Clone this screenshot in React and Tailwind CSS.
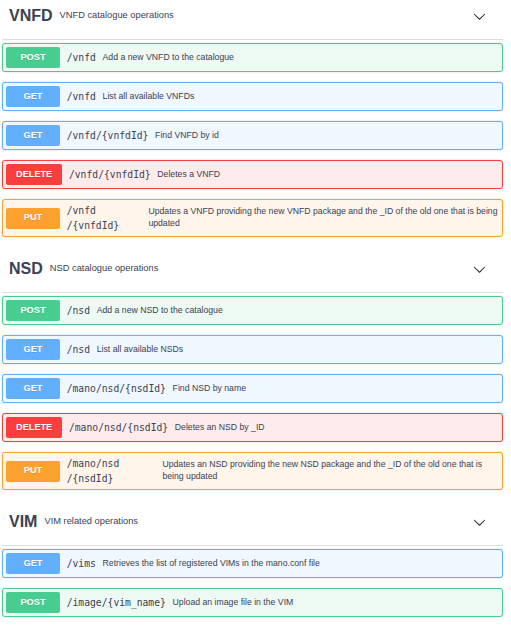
import React from 'react';

const METHOD_STYLES = {
  POST: { row: 'border-[#49cc90] bg-[#edfaf4]', badge: 'bg-[#49cc90]' },
  GET: { row: 'border-[#61affe] bg-[#eff7ff]', badge: 'bg-[#61affe]' },
  DELETE: { row: 'border-[#f93e3e] bg-[#feecec]', badge: 'bg-[#f93e3e]' },
  PUT: { row: 'border-[#fca130] bg-[#fff5ea]', badge: 'bg-[#fca130]' },
};

const sections = [
  {
    name: 'VNFD',
    description: 'VNFD catalogue operations',
    ops: [
      { method: 'POST', path: '/vnfd', summary: ['Add a new VNFD to the catalogue'] },
      { method: 'GET', path: '/vnfd', summary: ['List all available VNFDs'] },
      { method: 'GET', path: '/vnfd/{vnfdId}', summary: ['Find VNFD by id'] },
      { method: 'DELETE', path: '/vnfd/{vnfdId}', summary: ['Deletes a VNFD'] },
      {
        method: 'PUT',
        path: '/vnfd/{vnfdId}',
        pathWidth: 'w-[75px]',
        summary: [
          'Updates a VNFD providing the new VNFD package and the _ID of the old one that is being',
          'updated',
        ],
      },
    ],
  },
  {
    name: 'NSD',
    description: 'NSD catalogue operations',
    ops: [
      { method: 'POST', path: '/nsd', summary: ['Add a new NSD to the catalogue'] },
      { method: 'GET', path: '/nsd', summary: ['List all available NSDs'] },
      { method: 'GET', path: '/mano/nsd/{nsdId}', summary: ['Find NSD by name'] },
      { method: 'DELETE', path: '/mano/nsd/{nsdId}', summary: ['Deletes an NSD by _ID'] },
      {
        method: 'PUT',
        path: '/mano/nsd/{nsdId}',
        pathWidth: 'w-[89px]',
        summary: [
          'Updates an NSD providing the new NSD package and the _ID of the old one that is',
          'being updated',
        ],
      },
    ],
  },
  {
    name: 'VIM',
    description: 'VIM related operations',
    ops: [
      {
        method: 'GET',
        path: '/vims',
        summary: ['Retrieves the list of registered VIMs in the mano.conf file'],
      },
      { method: 'POST', path: '/image/{vim_name}', summary: ['Upload an image file in the VIM'] },
    ],
  },
];

// break opportunities before each slash, like swagger-ui does
const PathText = ({ path }) => {
  const parts = path.split('/').filter(Boolean);
  return parts.map((part, i) => (
    <React.Fragment key={i}>
      {i > 0 && <wbr />}/{part}
    </React.Fragment>
  ));
};

const Chevron = () => (
  <svg viewBox="0 0 20 20" className="h-[13px] w-[13px] fill-[#222]">
    <path d="M17.418 6.109c.272-.268.709-.268.979 0s.271.701 0 .969l-7.908 7.83c-.27.268-.707.268-.979 0l-7.908-7.83c-.27-.268-.27-.701 0-.969.271-.268.709-.268.979 0L10 13.25l7.418-7.141z" />
  </svg>
);

const Operation = ({ method, path, summary, pathWidth }) => {
  const style = METHOD_STYLES[method];
  return (
    <div
      className={`flex items-center rounded-[3px] border p-[3px] shadow-[0_0_2px_rgba(0,0,0,0.19)] ${style.row}`}
    >
      <div
        className={`flex h-[21px] min-w-[54px] shrink-0 items-center justify-center rounded-[2px] px-[10px] text-[9.2px] font-bold text-white [text-shadow:0_1px_0_rgba(0,0,0,0.1)] ${style.badge}`}
      >
        {method}
      </div>
      <span
        className={`shrink-0 px-[6.7px] font-['DejaVu_Sans_Mono',monospace] text-[9.7px] leading-[15px] text-[#3b4151] ${pathWidth ? `box-content ${pathWidth}` : ''}`}
      >
        <PathText path={path} />
      </span>
      <div className="flex-1 text-[8.7px] leading-[11.7px] whitespace-nowrap text-[#3b4151]">
        {summary.map((line, i) => (
          <div key={i}>{line}</div>
        ))}
      </div>
    </div>
  );
};

const Section = ({ name, description, ops }) => (
  <div className="flex flex-col">
    <div className="flex h-[40px] items-center border-b border-[#dcdde0] pr-[17px] pb-[7px] pl-[7px]">
      <h4 className="text-[16px] font-bold text-[#3b4151]">{name}</h4>
      <small className="pl-[7px] text-[9.3px] text-[#3b4151]">{description}</small>
      <div className="flex-1" />
      <Chevron />
    </div>
    <div className="flex flex-col gap-[10px] pt-[3px]">
      {ops.map((op, i) => (
        <Operation key={i} {...op} />
      ))}
    </div>
  </div>
);

const App = () => (
  <div className="min-h-screen bg-white font-['Liberation_Sans',Arial,sans-serif]">
    <div className="ml-[2px] flex w-[501px] flex-col gap-[16px]">
      {sections.map(section => (
        <Section key={section.name} {...section} />
      ))}
    </div>
  </div>
);

export default App;
